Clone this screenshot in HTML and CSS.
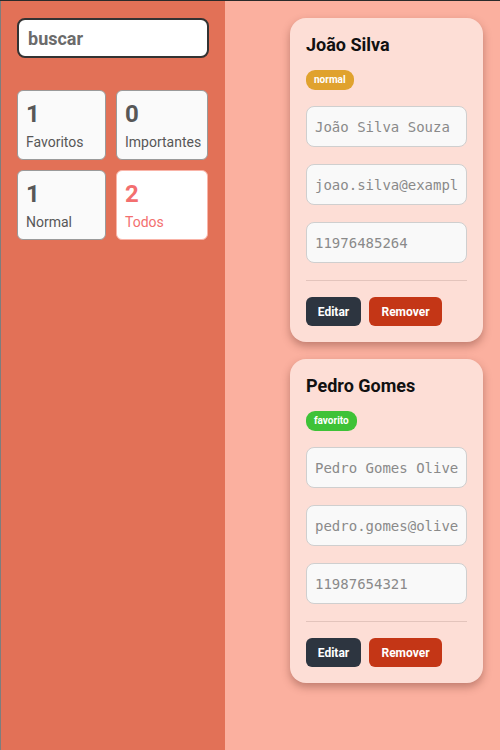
FILE: index.html
```html
<!DOCTYPE html>
<html lang="pt">
<head>
<meta charset="utf-8">
<title>Contatos</title>
<link rel="stylesheet" href="styles.css">
</head>
<body>
<div class="app">
  <aside class="sidebar">
    <input class="search" type="text" placeholder="buscar">
    <div class="stats">
      <div class="stat"><div class="stat-num">1</div><div class="stat-label">Favoritos</div></div>
      <div class="stat"><div class="stat-num">0</div><div class="stat-label">Importantes</div></div>
      <div class="stat"><div class="stat-num">1</div><div class="stat-label">Normal</div></div>
      <div class="stat active"><div class="stat-num">2</div><div class="stat-label">Todos</div></div>
    </div>
  </aside>
  <main class="main">
    <div class="card">
      <h2 class="card-title">João Silva</h2>
      <span class="badge badge-normal">normal</span>
      <input class="field" type="text" value="João Silva Souza">
      <input class="field" type="text" value="joao.silva@example.com">
      <input class="field" type="text" value="11976485264">
      <hr class="divider">
      <div class="actions">
        <button class="btn btn-edit">Editar</button>
        <button class="btn btn-remove">Remover</button>
      </div>
    </div>
    <div class="card">
      <h2 class="card-title">Pedro Gomes</h2>
      <span class="badge badge-fav">favorito</span>
      <input class="field" type="text" value="Pedro Gomes Oliveira">
      <input class="field" type="text" value="pedro.gomes@oliveira.com">
      <input class="field" type="text" value="11987654321">
      <hr class="divider">
      <div class="actions">
        <button class="btn btn-edit">Editar</button>
        <button class="btn btn-remove">Remover</button>
      </div>
    </div>
  </main>
</div>
</body>
</html>
```

FILE: styles.css
```css
* { box-sizing: border-box; }
html, body { margin: 0; padding: 0; height: 100%; }
body {
  font-family: Roboto, "Liberation Sans", Arial, sans-serif;
  background: #fbb09f;
}
.app {
  display: flex;
  min-height: 750px;
  border-top: 1px solid #2a2a2a;
}
.sidebar {
  width: 225px;
  flex: none;
  background: #e27157;
  border-left: 1px solid #7d7d7d;
  padding: 17px 16px;
}
.search {
  display: block;
  width: 192px;
  height: 40px;
  border: 2px solid #333;
  border-radius: 8px;
  background: #fff;
  padding: 0 9px;
  font-family: Roboto, "Liberation Sans", sans-serif;
  font-size: 18px;
  font-weight: 700;
  color: #666;
  outline: none;
}
.search::placeholder { color: #6b6b6b; opacity: 1; }
.stats {
  margin-top: 32px;
  display: grid;
  grid-template-columns: 89px 92px;
  gap: 10px;
}
.stat {
  height: 70px;
  background: #fafafa;
  border: 1px solid #9a9a9a;
  border-radius: 6px;
  padding: 9px 8px 0;
  color: #575757;
}
.stat-num {
  font-size: 24px;
  font-weight: 700;
  line-height: 28px;
}
.stat-label {
  margin-top: 5px;
  font-size: 14px;
  line-height: 18px;
}
.stat.active {
  background: #fff;
  border-color: #f9b4a8;
  color: #f36f6f;
}
.main {
  flex: 1;
  display: flex;
  flex-direction: column;
  align-items: flex-end;
  gap: 17px;
  padding: 17px 17px 40px 0;
}
.card {
  width: 193px;
  background: #fdded6;
  border-radius: 16px;
  padding: 16px;
  display: flex;
  flex-direction: column;
  align-items: flex-start;
  box-shadow: 0 4px 8px rgba(80, 30, 20, 0.35);
}
.card-title {
  margin: 0;
  font-size: 18px;
  font-weight: 700;
  line-height: 22px;
  color: #111;
}
.badge {
  margin-top: 14px;
  height: 20px;
  line-height: 20px;
  padding: 0 8px;
  border-radius: 9px;
  font-size: 10px;
  font-weight: 700;
  color: #fff;
}
.badge-normal { background: #e0a22e; }
.badge-fav { background: #3ec237; }
.field {
  display: block;
  width: 161px;
  height: 41px;
  margin-top: 17px;
  border: 1px solid #cfcfcf;
  border-radius: 8px;
  background: #f9f9f9;
  padding: 0 8px;
  font-family: "DejaVu Sans Mono", "Liberation Mono", monospace;
  font-size: 14px;
  color: #8a8a8a;
  outline: none;
}
.badge + .field { margin-top: 16px; }
.divider {
  width: 161px;
  margin: 17px 0 0 0;
  border: none;
  border-top: 1px solid #e3c4bc;
}
.actions {
  margin-top: 16px;
  display: flex;
  gap: 8px;
}
.btn {
  height: 29px;
  border: none;
  border-radius: 6px;
  color: #fff;
  font-family: Roboto, "Liberation Sans", sans-serif;
  font-size: 12px;
  font-weight: 700;
  padding: 0 12px;
}
.btn-edit { background: #2d3540; width: 55px; padding: 0; }
.btn-remove { background: #c43616; width: 73px; padding: 0; }
```
